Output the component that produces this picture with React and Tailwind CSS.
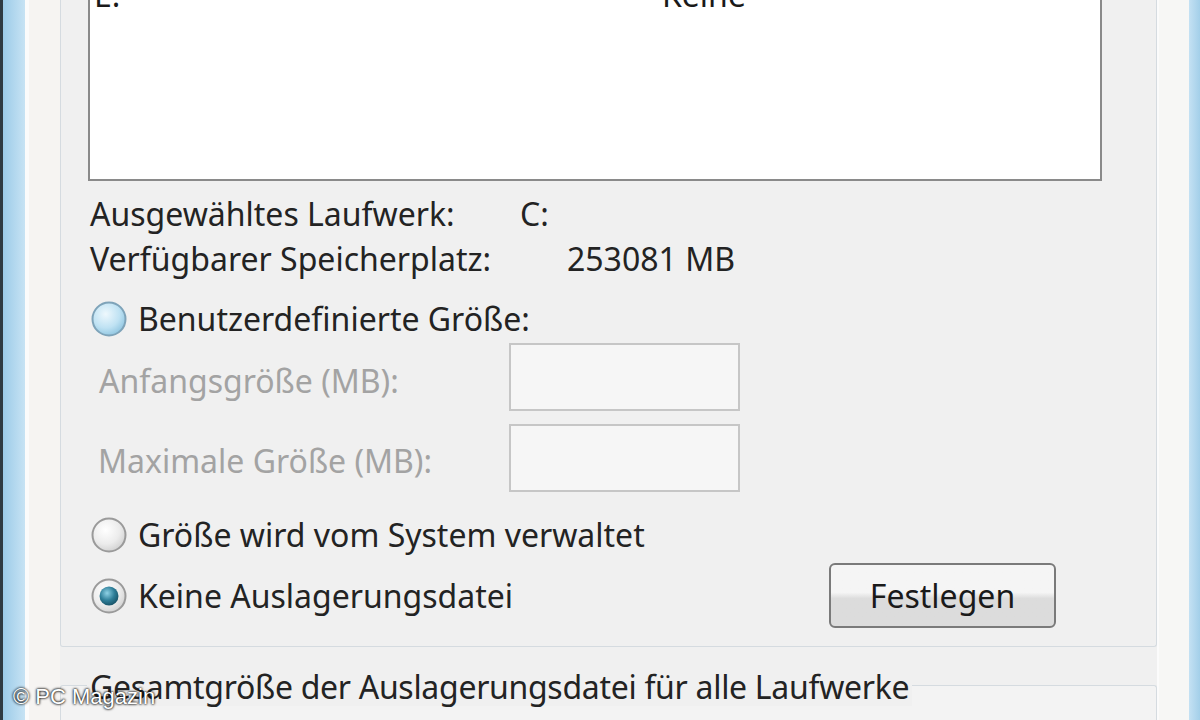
import React from 'react';

const Radio = ({ variant }) => {
  // variant: 'hover' | 'off' | 'on'
  const id = `rg-${variant}`;
  return (
    <svg width="36" height="36" viewBox="0 0 36 36" className="shrink-0">
      <defs>
        <radialGradient id={`${id}-fill`} cx="40%" cy="35%" r="70%">
          {variant === 'hover' ? (
            <>
              <stop offset="0%" stopColor="#eef8fd" />
              <stop offset="60%" stopColor="#bfe2f3" />
              <stop offset="100%" stopColor="#8cc3df" />
            </>
          ) : (
            <>
              <stop offset="0%" stopColor="#ffffff" />
              <stop offset="60%" stopColor="#ececec" />
              <stop offset="100%" stopColor="#cfcfcf" />
            </>
          )}
        </radialGradient>
        <radialGradient id={`${id}-dot`} cx="40%" cy="35%" r="70%">
          <stop offset="0%" stopColor="#8fd2e6" />
          <stop offset="55%" stopColor="#2f7f99" />
          <stop offset="100%" stopColor="#164f63" />
        </radialGradient>
      </defs>
      <circle
        cx="18"
        cy="18"
        r="16.5"
        fill={`url(#${id}-fill)`}
        stroke={variant === 'hover' ? '#7ea3b9' : '#9a9a9a'}
        strokeWidth="2"
      />
      {variant === 'on' && <circle cx="18" cy="18" r="9.5" fill={`url(#${id}-dot)`} />}
    </svg>
  );
};

export default function App() {
  return (
    <div className="relative w-[1200px] h-[720px] overflow-hidden flex bg-[#f0f0f0] text-[32px] leading-[38px] text-[#232323] font-['Noto_Sans','Open_Sans',sans-serif]">
      {/* left window frame */}
      <div className="w-[3px] bg-[#2f3a42]"></div>
      <div className="w-[22px] bg-gradient-to-r from-[#9ccbe8] to-[#c7e3f4]"></div>
      <div className="w-[35px] bg-[#f6f4f2] border-l-[4px] border-[#fbfbfb]"></div>

      {/* main column */}
      <div className="w-[1097px] flex flex-col">
        {/* group box 1 */}
        <div className="border-l border-r border-b border-[#d5dbe0] rounded-b-[3px] pl-[27px] pr-[54px] pb-[18px]">
          {/* listbox */}
          <div className="h-[181px] bg-white border-l-2 border-r-2 border-b-2 border-[#8a8a8a] overflow-hidden">
            <div className="flex -mt-[24px] text-[#1a1a1a]">
              <span className="w-[572px] pl-[4px]">E:</span>
              <span>Keine</span>
            </div>
          </div>

          {/* drive info */}
          <div className="mt-[11px]">
            <div className="flex items-center h-[44px] pl-[2px]">
              <span className="w-[430px]">Ausgewähltes Laufwerk:</span>
              <span>C:</span>
            </div>
            <div className="flex items-center h-[46px] pl-[2px]">
              <span className="w-[477px]">Verfügbarer Speicherplatz:</span>
              <span>253081 MB</span>
            </div>
          </div>

          {/* custom size */}
          <div className="mt-[18px] flex items-center h-[38px] pl-[3px] gap-[11px]">
            <Radio variant="hover" />
            <span>Benutzerdefinierte Größe:</span>
          </div>
          <div className="mt-[5px] flex items-center h-[68px] pl-[11px] text-[#a3a3a3]">
            <span className="w-[410px] pt-[8px]">Anfangsgröße (MB):</span>
            <div className="w-[231px] h-[68px] border-2 border-[#c6c6c6] bg-[#f6f6f6]"></div>
          </div>
          <div className="mt-[13px] flex items-center h-[68px] pl-[10px] text-[#a3a3a3]">
            <span className="w-[411px] pt-[6px]">Maximale Größe (MB):</span>
            <div className="w-[231px] h-[68px] border-2 border-[#c6c6c6] bg-[#f6f6f6]"></div>
          </div>

          {/* system managed */}
          <div className="mt-[25px] flex items-center h-[36px] pl-[3px] gap-[11px]">
            <Radio variant="off" />
            <span>Größe wird vom System verwaltet</span>
          </div>

          {/* no paging file + button */}
          <div className="mt-[10px] flex items-center h-[65px] pl-[3px]">
            <div className="w-[738px] flex items-center gap-[11px]">
              <Radio variant="on" />
              <span>Keine Auslagerungsdatei</span>
            </div>
            <button className="w-[227px] h-[65px] rounded-[6px] border-2 border-[#7a7a7a] bg-gradient-to-b from-[#f5f5f5] from-45% to-[#dcdcdc] to-55% text-[32px] text-[#1a1a1a]">
              Festlegen
            </button>
          </div>
        </div>

        {/* group box 2 */}
        <div className="mt-[38px] flex-1 border-t border-l border-r border-[#d5dbe0] rounded-t-[3px] bg-[#f3f3f3]">
          <div className="-mt-[18px] ml-[26px] w-fit px-[3px] bg-[#f0f0f0] tracking-[-0.3px]">
            Gesamtgröße der Auslagerungsdatei für alle Laufwerke
          </div>
        </div>
      </div>

      {/* right window frame */}
      <div className="w-[32px] bg-[#f7f7f5] border-l-2 border-[#fbfbfb]"></div>
      <div className="w-[11px] bg-gradient-to-r from-[#c4e1f3] to-[#a3cfe9]"></div>

      {/* watermark */}
      <div className="absolute left-[13px] top-[683px] text-[22px] leading-[28px] text-white font-['Liberation_Sans',Arial,sans-serif] [text-shadow:0_0_2px_#000,0_0_3px_#000]">
        © PC Magazin
      </div>
    </div>
  );
}
